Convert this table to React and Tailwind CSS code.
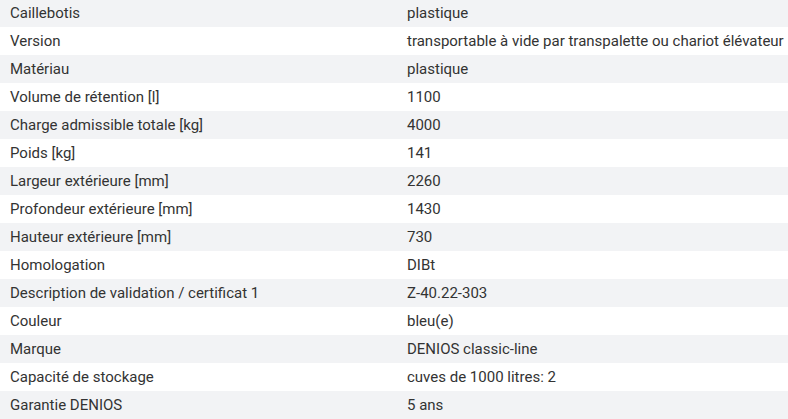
export default function App() {
  const rows = [
    ["Caillebotis", "plastique"],
    ["Version", "transportable à vide par transpalette ou chariot élévateur"],
    ["Matériau", "plastique"],
    ["Volume de rétention [l]", "1100"],
    ["Charge admissible totale [kg]", "4000"],
    ["Poids [kg]", "141"],
    ["Largeur extérieure [mm]", "2260"],
    ["Profondeur extérieure [mm]", "1430"],
    ["Hauteur extérieure [mm]", "730"],
    ["Homologation", "DIBt"],
    ["Description de validation / certificat 1", "Z-40.22-303"],
    ["Couleur", "bleu(e)"],
    ["Marque", "DENIOS classic-line"],
    ["Capacité de stockage", "cuves de 1000 litres: 2"],
    ["Garantie DENIOS", "5 ans"],
  ];
  return (
    <div className="w-[788px] h-[419px] overflow-hidden bg-white" style={{ fontFamily: "Roboto, 'Liberation Sans', sans-serif" }}>
      <div className="-mt-px flex flex-col">
        {rows.map(([k, v], i) => (
          <div
            key={i}
            className={`flex h-[28px] items-center text-[15px] text-[#333333] ${i % 2 === 0 ? "bg-[#f2f3f5]" : "bg-white"}`}
          >
            <div className="w-[407px] pl-[10px] whitespace-nowrap">{k}</div>
            <div className="flex-1 whitespace-nowrap">{v}</div>
          </div>
        ))}
      </div>
    </div>
  );
}
